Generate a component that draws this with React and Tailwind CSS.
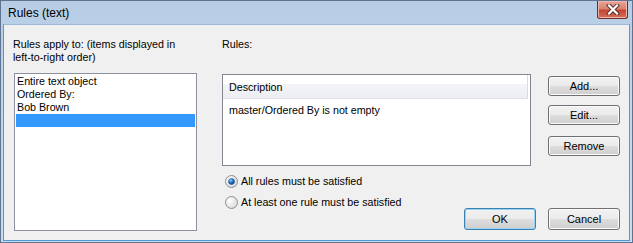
import React from "react";

const font = { fontFamily: '"Liberation Sans", Arial, sans-serif' };

const WinButton = ({ children, primary = false, className = "" }) => (
  <button
    className={`flex items-center justify-center rounded-[3px] border text-[11px] leading-none text-black ${
      primary ? "border-[#3c7fb1] shadow-[inset_0_0_0_1px_#9ad4f4]" : "border-[#707070] shadow-[inset_0_0_0_1px_#fbfbfb]"
    } bg-[linear-gradient(to_bottom,#f2f2f2_0%,#ebebeb_48%,#dddddd_52%,#cfcfcf_100%)] ${className}`}
  >
    {children}
  </button>
);

const Radio = ({ checked }) => (
  <svg width="13" height="13" viewBox="0 0 13 13" className="shrink-0">
    <defs>
      <radialGradient id={checked ? "rgOn" : "rgOff"} cx="0.35" cy="0.35" r="0.8">
        <stop offset="0" stopColor="#ffffff" />
        <stop offset="1" stopColor="#d4d4d4" />
      </radialGradient>
      <radialGradient id="dot" cx="0.35" cy="0.3" r="0.8">
        <stop offset="0" stopColor="#8fd1ff" />
        <stop offset="0.5" stopColor="#1d74c5" />
        <stop offset="1" stopColor="#0c3c7c" />
      </radialGradient>
    </defs>
    <circle cx="6.5" cy="6.5" r="6" fill={`url(#${checked ? "rgOn" : "rgOff"})`} stroke="#8e8f8f" />
    {checked && <circle cx="6.5" cy="6.5" r="3" fill="url(#dot)" stroke="#1b4f89" strokeWidth="0.6" />}
  </svg>
);

export default function App() {
  return (
    <div style={font} className="w-[633px] h-[243px] border border-[#5e7490] bg-[linear-gradient(to_bottom,#b7cde6_0%,#c1d5eb_40%,#cbdcef_100%)] flex flex-col px-[2px] pb-[1px]">
      {/* title bar */}
      <div className="h-[23px] flex items-start justify-between">
        <div className="pl-[5px] pt-[6px] text-[12px] leading-none text-black">Rules (text)</div>
        <div className="mr-[2px] w-[31px] h-[18px] rounded-b-[3px] border border-[#6e2a24] border-t-0 bg-[linear-gradient(to_bottom,#e8a596_0%,#d98472_45%,#c64631_55%,#d2705a_100%)] flex items-center justify-center shadow-[inset_0_0_0_1px_#f0b9ae]">
          <svg width="14" height="11" viewBox="0 0 14 11">
            <path d="M3 1.5 L11 9.5 M11 1.5 L3 9.5" stroke="#5a2a24" strokeWidth="4" strokeLinecap="square" />
            <path d="M3 1.5 L11 9.5 M11 1.5 L3 9.5" stroke="#ffffff" strokeWidth="2.2" strokeLinecap="square" />
          </svg>
        </div>
      </div>

      {/* client area */}
      <div className="flex-1 border border-[#4d9ad6] border-t-[#9db9d6] bg-[#f0f0f0] flex pt-[13px] pl-[9px] text-[10.7px] leading-[13px] text-black">
        {/* left column */}
        <div className="w-[184px] flex flex-col">
          <div className="whitespace-nowrap">
            Rules apply to: (items displayed in
            <br />
            left-to-right order)
          </div>
          <div className="mt-[9px] ml-[1px] w-[183px] h-[158px] border border-[#8e8f9f] bg-white pt-[1px]">
            <div className="pl-[2px]">Entire text object</div>
            <div className="pl-[2px]">Ordered By:</div>
            <div className="pl-[2px]">Bob Brown</div>
            <div className="mx-px h-[13px] bg-[#3399ff]" />
          </div>
        </div>

        {/* right part */}
        <div className="ml-[25px] flex flex-col">
          <div className="flex">
            <div className="flex flex-col">
              <div>Rules:</div>
              <div className="mt-[23px] w-[309px] h-[92px] border border-[#828790] bg-white">
                <div className="h-[24px] mr-[2px] flex items-end border-b border-[#e2e3e5] border-r border-r-[#dcdcdc] bg-[linear-gradient(to_bottom,#ffffff_0%,#ffffff_38%,#f4f5f7_39%,#eceef1_100%)] pl-[6px] pb-[4px]">
                  Description
                </div>
                <div className="pl-[6px] pt-[5px]">master/Ordered By is not empty</div>
              </div>
            </div>
            <div className="ml-[17px] mt-[38px] flex flex-col w-[72px]">
              <WinButton className="h-[20px]">Add...</WinButton>
              <WinButton className="h-[20px] mt-[9px]">Edit...</WinButton>
              <WinButton className="h-[20px] mt-[11px]">Remove</WinButton>
            </div>
          </div>

          <div className="mt-[5px] h-[59px] flex justify-between">
            <div className="flex flex-col gap-px">
              <div className="h-[20px] flex items-center gap-[3px] pl-[3px]">
                <Radio checked />
                <span>All rules must be satisfied</span>
              </div>
              <div className="h-[20px] flex items-center gap-[3px] pl-[3px]">
                <Radio />
                <span>At least one rule must be satisfied</span>
              </div>
            </div>
            <div className="self-end flex gap-[12px]">
              <WinButton primary className="w-[72px] h-[22px]">OK</WinButton>
              <WinButton className="w-[72px] h-[22px]">Cancel</WinButton>
            </div>
          </div>
        </div>
      </div>
    </div>
  );
}
